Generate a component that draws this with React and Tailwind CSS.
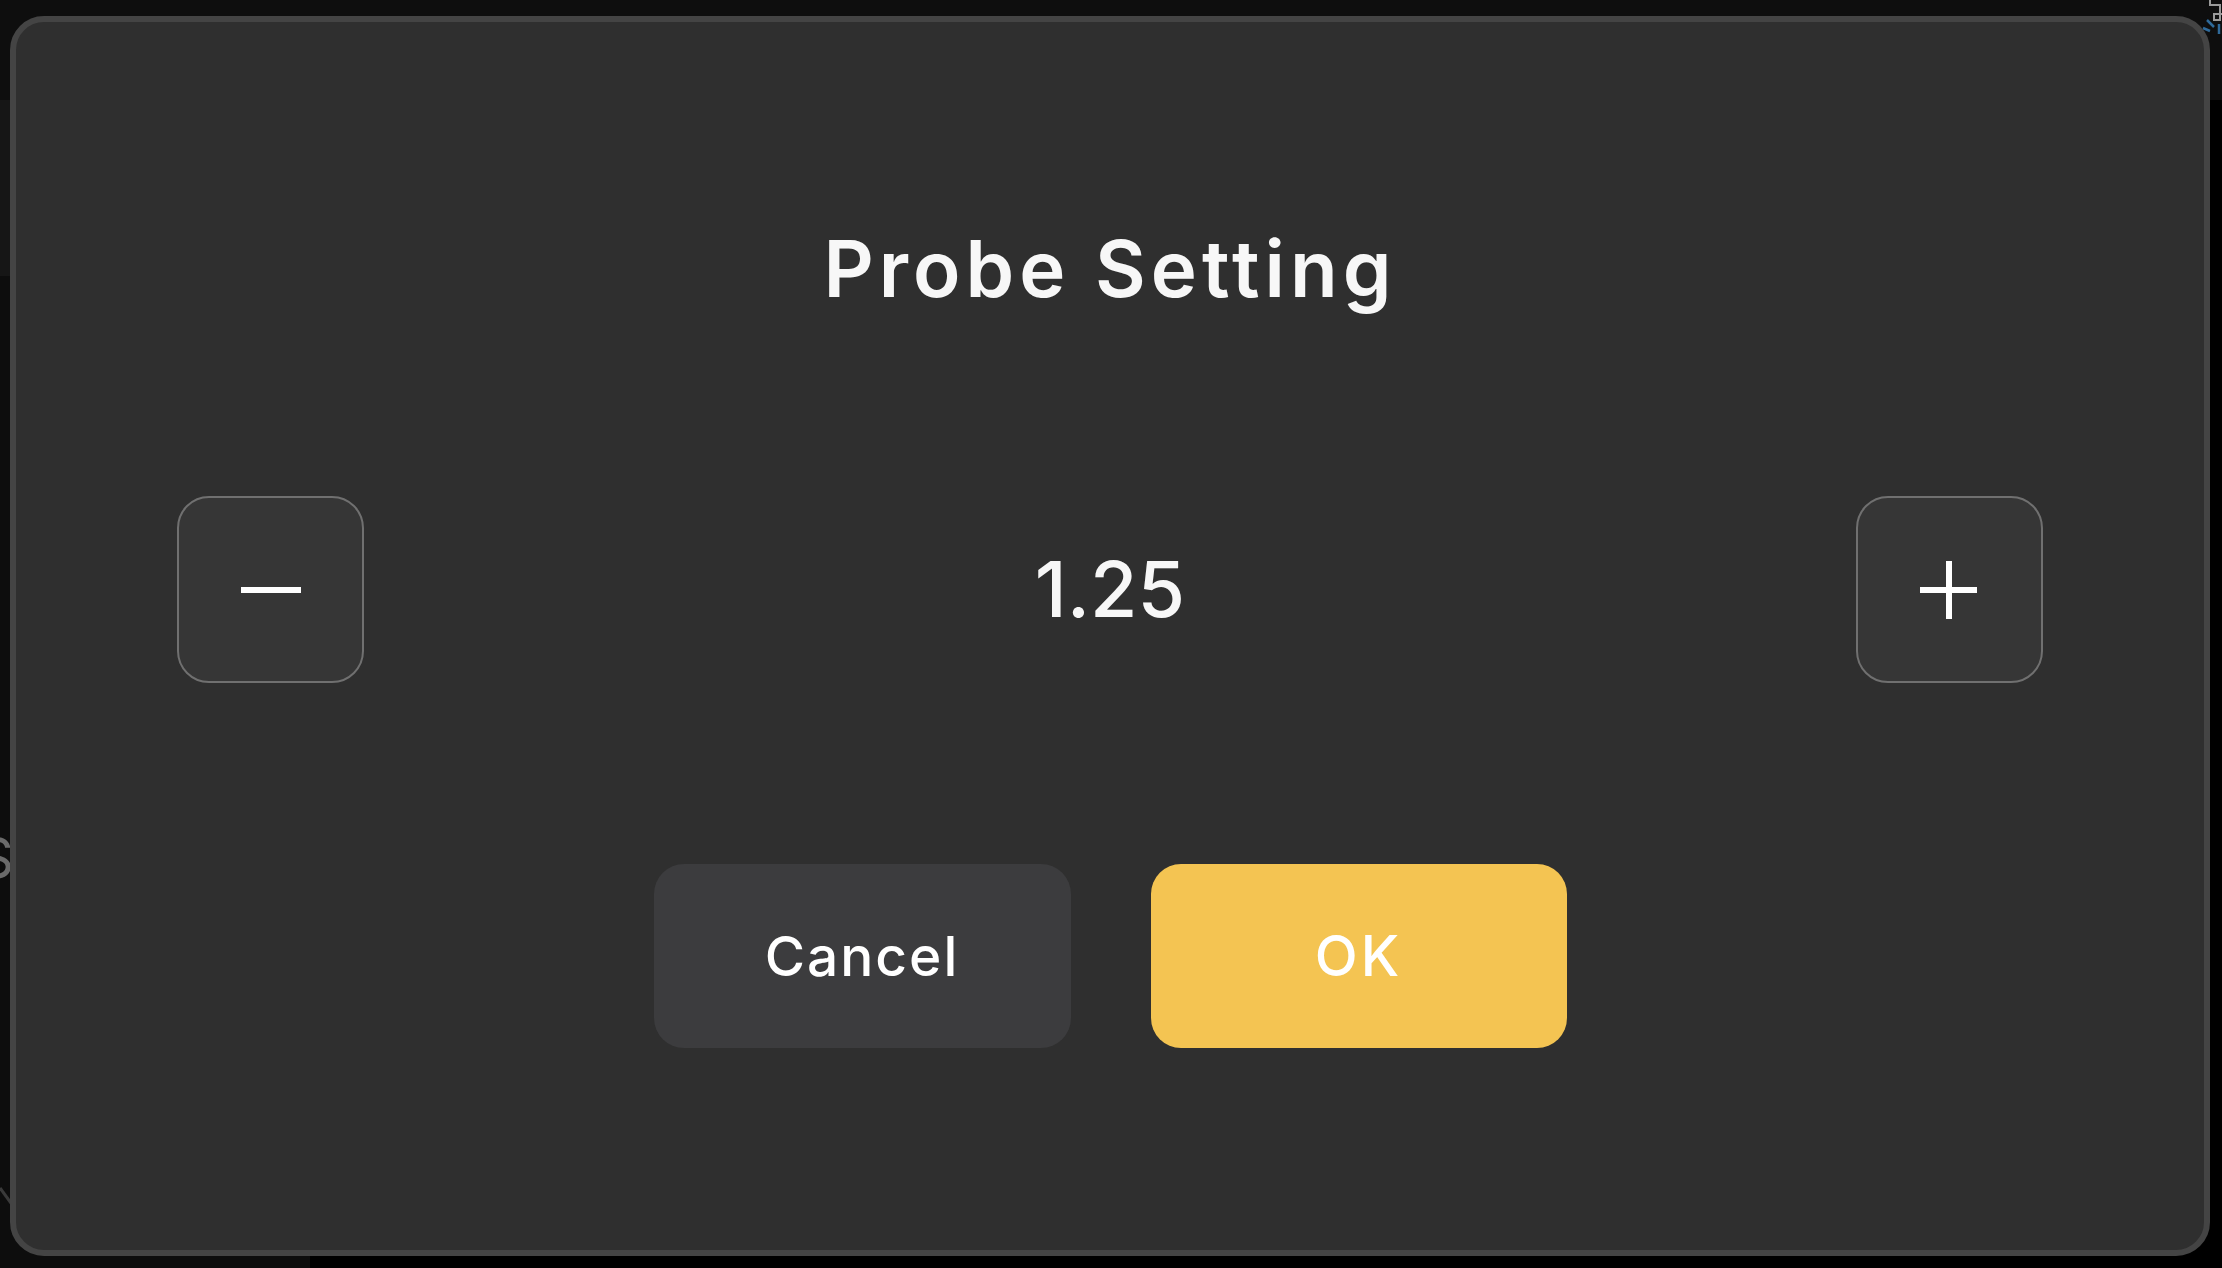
import React from "react";

export default function App() {
  const font = { fontFamily: "Inter, 'Noto Sans', sans-serif" };
  return (
    <div className="relative w-[2222px] h-[1268px] overflow-hidden bg-black" style={font}>
      {/* background app behind the dialog */}
      <div className="absolute left-0 top-0 w-[2222px] h-[100px] bg-[#0e0e0e]" />
      <div className="absolute left-0 top-[100px] w-[310px] h-[1168px] bg-[#0d0d0d]" />
      <div className="absolute left-0 top-[100px] w-[310px] h-[176px] bg-[#161616]" />
      <span className="absolute left-[-22px] top-[830px] text-[56px] leading-none text-[#6a6a6a]">S</span>
      <svg className="absolute left-0 top-[1180px]" width="20" height="40" viewBox="0 0 20 40">
        <line x1="0" y1="8" x2="16" y2="30" stroke="#3a3a3a" strokeWidth="3" />
      </svg>
      <svg className="absolute left-[2200px] top-0" width="22" height="40" viewBox="0 0 22 40">
        <path d="M10 0 V5 H20 V20 H14 V14 H22" fill="none" stroke="#9a9a9a" strokeWidth="2" />
        <line x1="7" y1="20" x2="14" y2="27" stroke="#2f6a9a" strokeWidth="2.5" />
        <line x1="3" y1="28" x2="10" y2="31" stroke="#2f6a9a" strokeWidth="2.5" />
        <line x1="19" y1="24" x2="19" y2="34" stroke="#2f6a9a" strokeWidth="2.5" />
      </svg>

      {/* dialog */}
      <div className="absolute left-[10px] top-[16px] w-[2200px] h-[1240px] rounded-[34px] border-[6px] border-[#444444] bg-[#2f2f2f] flex flex-col items-center">
        <h1 className="mt-[208px] text-[78px] leading-none font-semibold tracking-[5px] text-[#f7f7f7]">
          Probe Setting
        </h1>

        <div className="mt-[188px] w-full px-[161px] flex items-center justify-between">
          <button className="w-[187px] h-[187px] rounded-[32px] border-2 border-[#707070] bg-[#363636] flex items-center justify-center">
            <span className="block w-[60px] h-[6px] bg-white" />
          </button>
          <div className="text-[77px] leading-none font-medium text-[#f7f7f7]">1.25</div>
          <button className="relative w-[187px] h-[187px] rounded-[32px] border-2 border-[#707070] bg-[#363636] flex items-center justify-center">
            <svg width="58" height="58" viewBox="0 0 58 58">
              <rect x="0" y="26" width="57" height="6" fill="#ffffff" />
              <rect x="26" y="0" width="6" height="58" fill="#ffffff" />
            </svg>
          </button>
        </div>

        <div className="mt-[181px] flex gap-[80px]">
          <button className="w-[417px] h-[184px] rounded-[30px] bg-[#3c3c3e] text-white text-[55px] leading-none font-medium tracking-[2px]">
            Cancel
          </button>
          <button className="w-[416px] h-[184px] rounded-[30px] bg-[#f4c452] text-white text-[56px] leading-none font-medium tracking-[3px]">
            OK
          </button>
        </div>
      </div>
    </div>
  );
}
